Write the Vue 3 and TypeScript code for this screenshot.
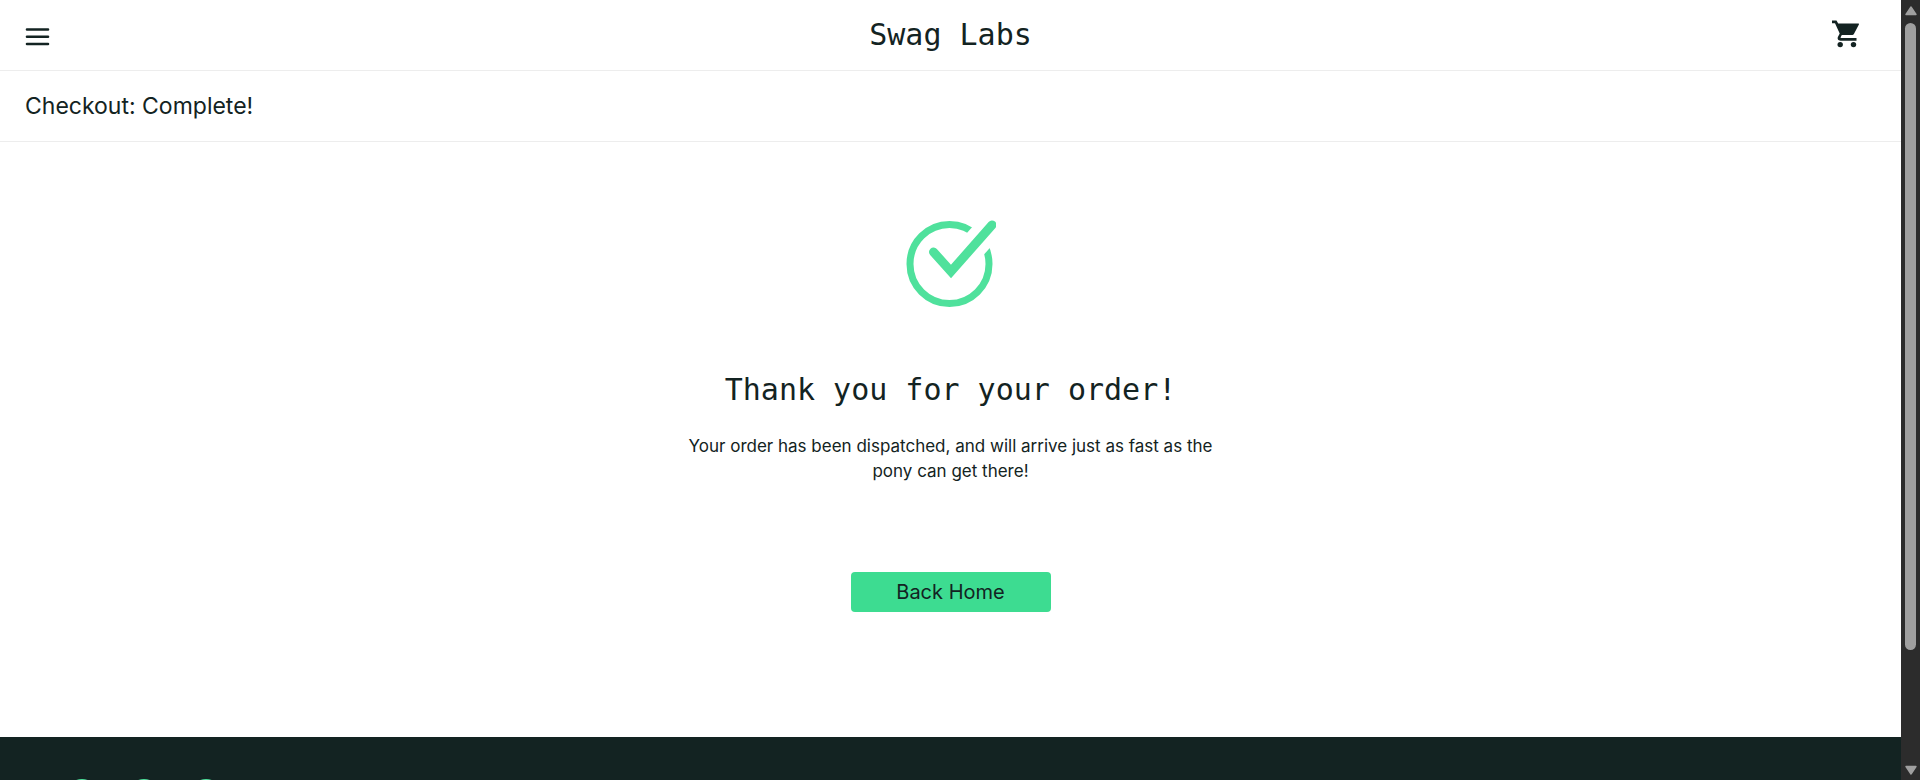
<script setup lang="ts">
const title = 'Checkout: Complete!'
const socialLinks: string[] = ['Twitter', 'Facebook', 'LinkedIn']
</script>

<template>
  <div class="shell">
    <div class="page">
      <header class="header">
        <button class="icon-button" type="button" aria-label="Open Menu">
          <svg class="menu-icon" viewBox="0 0 24 18" aria-hidden="true">
            <path d="M1.5 1.5H22.5M1.5 8.7H22.5M1.5 16H22.5" />
          </svg>
        </button>
        <div class="brand">Swag Labs</div>
        <a class="cart" href="#cart" aria-label="Shopping cart">
          <svg class="cart-icon" viewBox="0 0 28 28" aria-hidden="true">
            <path d="M0 .5H4.5L6.2 3.5H26.2C26.8 3.5 27.2 4 26.9 4.6L21.9 14Q21.3 15 20.3 15H9.8L8.6 17.2Q8.3 18 9.2 18H24.5V20.7H8.5C6.2 20.7 5 18.7 6 16.8L7.7 13.6L3 3.2H0Z" />
            <circle cx="8.2" cy="24.6" r="2.7" />
            <circle cx="21.5" cy="24.6" r="2.7" />
          </svg>
        </a>
      </header>

      <div class="title-bar">
        <span class="title">{{ title }}</span>
      </div>

      <main class="complete">
        <svg class="check" viewBox="0 0 90 88" aria-hidden="true">
          <circle class="ring" cx="43.5" cy="44" r="39.5" />
          <path class="gap" d="M60 34.5L95 -5.2" />
          <path class="tick" d="M27.5 32L45 51.5L86 5" />
        </svg>
        <h2 class="heading">Thank you for your order!</h2>
        <p class="text">
          Your order has been dispatched, and will arrive just as fast as the pony can get there!
        </p>
        <button class="back" type="button">Back Home</button>
      </main>

      <footer class="footer">
        <ul class="social">
          <li v-for="name in socialLinks" :key="name">
            <a class="social-link" href="#social" :aria-label="name"></a>
          </li>
        </ul>
      </footer>
    </div>

    <div class="scrollbar" aria-hidden="true">
      <svg class="arrow" viewBox="0 0 12 10"><path d="M6 1L11 8.5H1Z" /></svg>
      <div class="track"><div class="thumb"></div></div>
      <svg class="arrow" viewBox="0 0 12 10"><path d="M6 9L11 1.5H1Z" /></svg>
    </div>
  </div>
</template>

<style>
body {
  margin: 0;
  background: #fff;
}
</style>

<style scoped>
.shell {
  display: flex;
  height: 100vh;
  overflow: hidden;
  color: #132322;
  font-family: Inter, "Liberation Sans", sans-serif;
}

.page {
  flex: 1;
  min-width: 0;
  overflow: hidden;
}

.header {
  display: grid;
  grid-template-columns: 1fr auto 1fr;
  align-items: center;
  height: 70px;
  padding: 0 25px;
  border-bottom: 1px solid #ededed;
}

.icon-button {
  justify-self: start;
  padding: 4px 0 0;
  border: 0;
  background: none;
  cursor: pointer;
}

.menu-icon {
  display: block;
  width: 25px;
  height: 18px;
  fill: none;
  stroke: #132322;
  stroke-width: 2.6;
  stroke-linecap: round;
}

.brand {
  font-family: "DejaVu Sans Mono", "Liberation Mono", monospace;
  font-size: 30px;
  line-height: 40px;
}

.cart {
  justify-self: end;
  padding: 0 16px 2px 0;
}

.cart-icon {
  display: block;
  width: 28px;
  height: 28px;
  fill: #132322;
}

.title-bar {
  display: flex;
  align-items: center;
  height: 70px;
  padding: 0 25px;
  border-bottom: 1px solid #ededed;
}

.title {
  font-size: 23px;
  line-height: 32px;
}

.complete {
  display: flex;
  flex-direction: column;
  align-items: center;
  padding: 78px 20px 125px;
}

.check {
  width: 90px;
  height: 88px;
  fill: none;
}

.ring {
  stroke: #4fe19c;
  stroke-width: 7;
}

.gap {
  stroke: #fff;
  stroke-width: 27;
}

.tick {
  stroke: #4fe19c;
  stroke-width: 9;
  stroke-linecap: round;
}

.heading {
  margin: 62px 0 0;
  font-family: "DejaVu Sans Mono", "Liberation Mono", monospace;
  font-size: 30px;
  font-weight: 400;
  line-height: 40px;
}

.text {
  max-width: 540px;
  margin: 24px 0 0;
  font-size: 17px;
  line-height: 25px;
  text-align: center;
}

.back {
  width: 200px;
  height: 40px;
  margin-top: 88px;
  padding: 0;
  border: 0;
  border-radius: 4px;
  background: #3ddc91;
  color: #132322;
  font-family: inherit;
  font-size: 20px;
  line-height: 24px;
  cursor: pointer;
}

.footer {
  padding: 42px 66px;
  background: #132322;
}

.social {
  display: flex;
  gap: 30px;
  margin: 0;
  padding: 0;
  list-style: none;
}

.social-link {
  display: block;
  width: 32px;
  height: 32px;
  border-radius: 50%;
  background: #4fe19c;
}

.scrollbar {
  display: flex;
  flex-direction: column;
  align-items: center;
  flex: none;
  box-sizing: border-box;
  width: 19px;
  padding: 6px 0 5px;
  background: #2c2c2c;
}

.arrow {
  flex: none;
  width: 12px;
  height: 10px;
  fill: #9f9f9f;
  stroke: #9f9f9f;
  stroke-width: 1.4;
  stroke-linejoin: round;
}

.track {
  flex: 1;
  width: 11px;
  padding: 7px 0 4px;
}

.thumb {
  height: 85%;
  border-radius: 6px;
  background: #9f9f9f;
}
</style>
